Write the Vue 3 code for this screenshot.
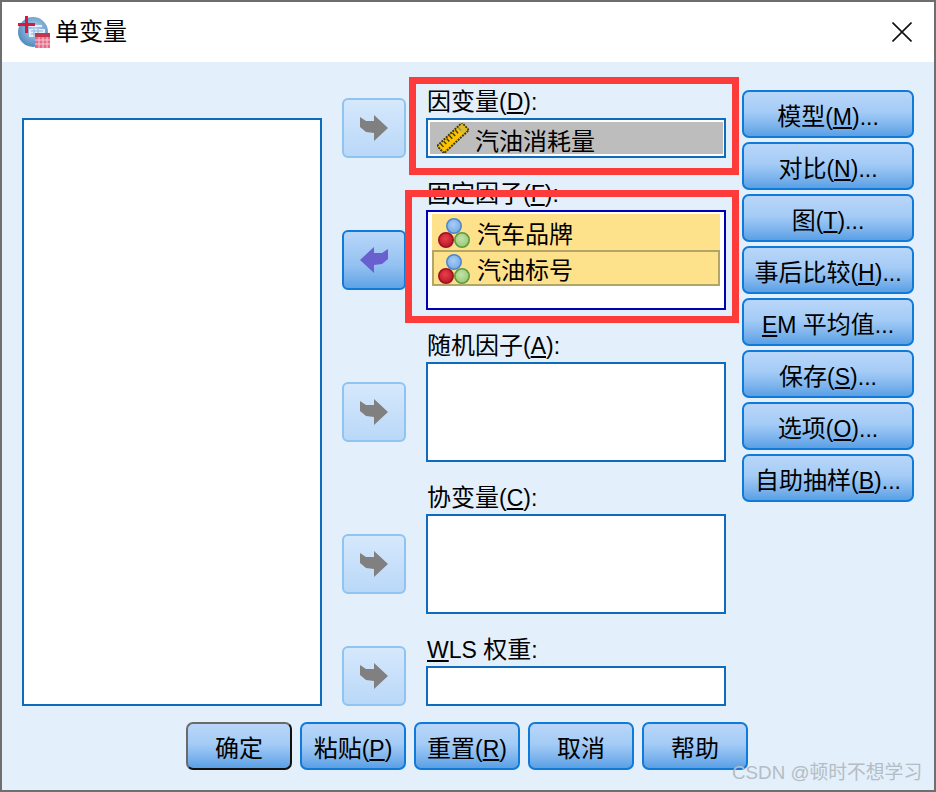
<script setup>
const fields = [
  { id: 'dep', pre: '因变量', open: '(', key: 'D', post: '):', box: 'short', mid: false, active: false },
  { id: 'fixed', pre: '固定因子', open: '(', key: 'F', post: '):', box: 'tall focus', mid: true, active: true, items: ['汽车品牌', '汽油标号'] },
  { id: 'rand', pre: '随机因子', open: '(', key: 'A', post: '):', box: 'tall', mid: true, active: false },
  { id: 'cov', pre: '协变量', open: '(', key: 'C', post: '):', box: 'tall', mid: true, active: false },
  { id: 'wls', pre: '', open: '', key: 'W', post: 'LS ', end: '权重', tail: ':', box: 'short', mid: false, active: false }
]
const sideButtons = [
  { pre: '模型', open: '(', key: 'M', post: ')...' },
  { pre: '对比', open: '(', key: 'N', post: ')...' },
  { pre: '图', open: '(', key: 'T', post: ')...' },
  { pre: '事后比较', open: '(', key: 'H', post: ')...' },
  { pre: '', open: '', key: 'E', post: 'M ', end: '平均值', tail: '...' },
  { pre: '保存', open: '(', key: 'S', post: ')...' },
  { pre: '选项', open: '(', key: 'O', post: ')...' },
  { pre: '自助抽样', open: '(', key: 'B', post: ')...' }
]
const footButtons = [
  { pre: '确定', primary: true },
  { pre: '粘贴', open: '(', key: 'P', post: ')' },
  { pre: '重置', open: '(', key: 'R', post: ')' },
  { pre: '取消' },
  { pre: '帮助' }
]
</script>

<template>
  <div class="window">
    <header class="titlebar">
      <svg class="app-icon" viewBox="0 0 32 32" width="32" height="32">
        <defs>
          <radialGradient id="globe" cx="0.55" cy="0.4" r="0.7">
            <stop offset="0" stop-color="#b5d3ee" />
            <stop offset="1" stop-color="#3f7fb8" />
          </radialGradient>
        </defs>
        <circle cx="15" cy="16" r="15" fill="url(#globe)" />
        <path d="M11 9h13v2H11zM11 13h16v8H11z" fill="#e4eefa" />
        <path d="M13 15h12M13 18h12M16 13v8M20 13v8" stroke="#8fb3df" stroke-width="1" />
        <path d="M0 7h17v3H0zM7 0h3v17H7z" fill="#d8183c" />
        <rect x="17" y="17" width="15" height="15" fill="#e86a88" />
        <rect x="17" y="17" width="15" height="4" fill="#c0374f" />
        <path d="M17 24h15M17 28h15M21 21v11M25 21v11M29 21v11" stroke="#f7c9d3" stroke-width="1" />
      </svg>
      <span class="title">单变量</span>
      <svg class="close" viewBox="0 0 20 20" width="20" height="20">
        <path d="M0.5 0.5L19.5 19.5M19.5 0.5L0.5 19.5" stroke="#111" stroke-width="1.6" fill="none" />
      </svg>
    </header>

    <main class="body">
      <div class="columns">
        <div class="source-list"></div>

        <div class="fields">
          <div v-for="f in fields" :key="f.id" class="row">
            <button class="shuttle" :class="{ mid: f.mid, active: f.active }">
              <svg viewBox="0 0 28 26" width="28" height="26">
                <path
                  v-if="f.active"
                  d="M0 13L14 0V6H22L28 2V12L22 17L14 18V26Z"
                  fill="#6a5fce"
                />
                <path v-else d="M28 13L14 0V6H6L0 2V12L6 17L14 18V26Z" fill="#808080" />
              </svg>
            </button>
            <div class="field">
              <div class="label">{{ f.pre }}<span class="lat">{{ f.open }}<u>{{ f.key }}</u>{{ f.post }}</span>{{ f.end }}<span class="lat">{{ f.tail }}</span></div>
              <div class="box" :class="f.box">
                <div v-if="f.id === 'dep'" class="var var-scale">
                  <svg class="var-icon" viewBox="0 0 32 30" width="32" height="30">
                    <g transform="rotate(-43 16 15)">
                      <rect x="-1" y="10" width="34" height="10" fill="#fdc300" stroke="#3a3a20" stroke-width="2" stroke-dasharray="2 1" />
                      <path d="M3 11v4M7 11v4M11 11v4M15 11v4M19 11v4M23 11v4M27 11v4" stroke="#3a3a20" stroke-width="1.4" />
                      <rect x="26" y="11" width="6" height="8" fill="#c9b84a" opacity="0.7" />
                    </g>
                  </svg>
                  <span>汽油消耗量</span>
                </div>
                <div
                  v-for="(item, i) in f.items"
                  :key="item"
                  class="var var-nominal"
                  :class="{ current: i === 1 }"
                >
                  <svg class="var-icon" viewBox="0 0 32 32" width="32" height="32">
                    <defs>
                      <radialGradient id="ballBlue" cx="0.45" cy="0.4" r="0.6">
                        <stop offset="0" stop-color="#a6cdf5" />
                        <stop offset="1" stop-color="#78aae6" />
                      </radialGradient>
                      <radialGradient id="ballRed" cx="0.45" cy="0.4" r="0.6">
                        <stop offset="0" stop-color="#e8404a" />
                        <stop offset="1" stop-color="#b81828" />
                      </radialGradient>
                      <radialGradient id="ballGreen" cx="0.45" cy="0.4" r="0.6">
                        <stop offset="0" stop-color="#c4e2a8" />
                        <stop offset="1" stop-color="#98c878" />
                      </radialGradient>
                    </defs>
                    <circle cx="16" cy="10" r="7.2" fill="url(#ballBlue)" stroke="#4d86cf" stroke-width="1.6" />
                    <circle cx="24" cy="24" r="7.2" fill="url(#ballGreen)" stroke="#5f9a3c" stroke-width="1.6" />
                    <circle cx="8" cy="24" r="7.2" fill="url(#ballRed)" stroke="#a01020" stroke-width="1.6" />
                  </svg>
                  <span>{{ item }}</span>
                </div>
              </div>
            </div>
          </div>
        </div>

        <div class="side">
          <button v-for="b in sideButtons" :key="b.key" class="btn side-btn">{{ b.pre }}<span class="lat">{{ b.open }}<u>{{ b.key }}</u>{{ b.post }}</span>{{ b.end }}<span class="lat">{{ b.tail }}</span></button>
        </div>
      </div>

      <div class="foot">
        <button
          v-for="b in footButtons"
          :key="b.pre"
          class="btn foot-btn"
          :class="{ primary: b.primary }"
        >{{ b.pre }}<span class="lat">{{ b.open }}<u v-if="b.key">{{ b.key }}</u>{{ b.post }}</span></button>
      </div>
    </main>

    <div class="mark mark-dep"></div>
    <div class="mark mark-fixed"></div>
    <div class="watermark">CSDN @顿时不想学习</div>
  </div>
</template>

<style scoped>
.window {
  position: relative;
  box-sizing: border-box;
  width: 936px;
  height: 792px;
  border: 2px solid #6e6e6e;
  background: #e3effb;
  font-family: "Liberation Sans", "Noto Sans CJK SC", sans-serif;
  font-size: 24px;
  color: #000;
  overflow: hidden;
}
.lat { font-size: 23px; }
.titlebar {
  display: flex;
  align-items: center;
  height: 60px;
  padding: 0 22px 0 16px;
  background: #fff;
}
.app-icon { margin-right: 5px; }
.title { flex: 1; line-height: 30px; }
.body { padding: 28px 20px 0; }
.columns { display: flex; align-items: flex-start; }
.source-list {
  box-sizing: border-box;
  width: 300px;
  height: 588px;
  margin-top: 28px;
  margin-right: 20px;
  border: 2px solid #0f6cbd;
  background: #fff;
}
.fields {
  display: flex;
  flex-direction: column;
  gap: 24px;
  width: 384px;
}
.row { display: flex; align-items: flex-end; gap: 20px; }
.shuttle {
  display: flex;
  align-items: center;
  justify-content: center;
  box-sizing: border-box;
  width: 64px;
  height: 60px;
  padding: 0;
  border: 2px solid #8fc3f0;
  border-radius: 6px;
  background: linear-gradient(#d6e8fc, #b9d8f8);
}
.shuttle.mid { margin-bottom: 20px; }
.shuttle.active {
  border-color: #0f7ad9;
  background: linear-gradient(#b9d6f9, #93c1f1 60%, #5fa3e6);
}
.field { width: 300px; }
.label { height: 28px; line-height: 24px; padding-left: 1px; white-space: nowrap; }
.box {
  box-sizing: border-box;
  width: 300px;
  padding: 2px 4px;
  border: 2px solid #0f6cbd;
  background: #fff;
}
.box.short { height: 40px; }
.box.tall { height: 100px; }
.box.focus { border-color: #0000b4; }
.var {
  display: flex;
  align-items: center;
  box-sizing: border-box;
  line-height: 28px;
  white-space: nowrap;
}
.var-scale {
  height: 32px;
  width: 293px;
  margin-left: -2px;
  padding-left: 7px;
  background: #bdbdbd;
}
.var-scale span { margin-top: 7px; }
.var-scale .var-icon { margin-right: 6px; }
.var-nominal {
  width: 288px;
  height: 36px;
  padding-left: 6px;
  background: #fee28b;
}
.var-nominal span { margin-top: 6px; }
.var-nominal .var-icon { margin-right: 7px; }
.var-nominal.current { border: 2px solid #b3a566; padding-left: 4px; }
.btn {
  box-sizing: border-box;
  height: 48px;
  padding: 6px 0 0;
  border: 2px solid #0f7ad9;
  border-radius: 7px;
  background: linear-gradient(#b9d6f9, #a4ccf6 45%, #7fb5ee 75%, #5a9fe5);
  color: #000;
  font: inherit;
  line-height: 30px;
  white-space: nowrap;
}
.side {
  display: flex;
  flex-direction: column;
  gap: 4px;
  width: 172px;
  margin-left: 16px;
}
.side-btn { width: 172px; }
.foot {
  display: flex;
  gap: 8px;
  margin-top: 16px;
  padding-left: 164px;
}
.foot-btn { width: 106px; }
.foot-btn.primary { border-color: #6a6a6a #111 #111 #6a6a6a; }
.mark {
  position: absolute;
  box-sizing: border-box;
  border: 7px solid #fe3b3b;
  pointer-events: none;
}
.mark-dep { left: 407px; top: 75px; width: 330px; height: 98px; }
.mark-fixed { left: 403px; top: 188px; width: 334px; height: 133px; }
.watermark {
  position: absolute;
  left: 730px;
  top: 758px;
  color: #b4bcc4;
  font-size: 18.8px;
  line-height: 26px;
  white-space: nowrap;
}
</style>
